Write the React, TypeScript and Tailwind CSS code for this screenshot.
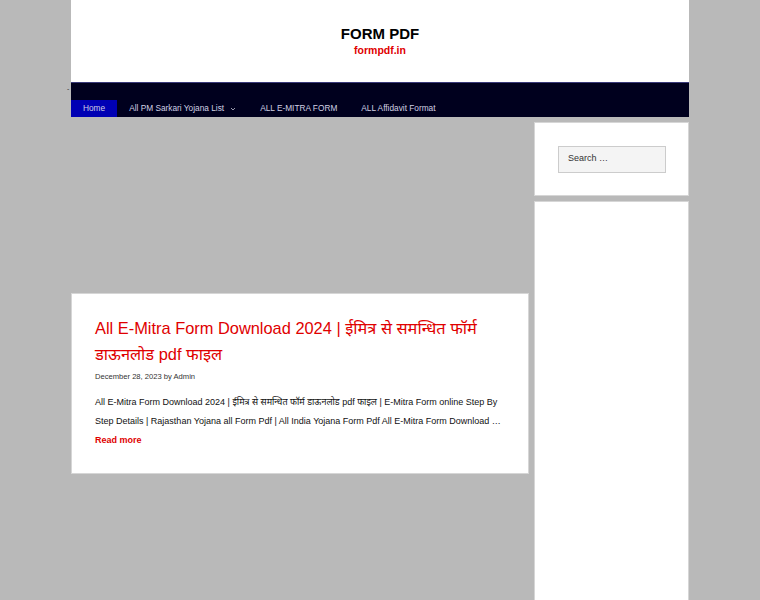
import React from "react";

export default function App() {
  const font = { fontFamily: '"Liberation Sans", Arial, "Noto Sans", sans-serif' };
  return (
    <div className="min-h-[600px] w-[760px] bg-[#b9b9b9] overflow-hidden" style={font}>
      <div className="relative mx-auto w-[618px]">
        <span className="absolute left-[-4px] top-[85px] text-[7px] leading-none text-[#333]">-</span>
        <header className="flex h-[82px] flex-col items-center justify-center bg-white">
          <div className="text-[15px] font-bold leading-[18px] text-black">FORM PDF</div>
          <div className="text-[10.5px] font-bold leading-[14px] text-[#e00000]">formpdf.in</div>
        </header>
        <nav className="flex h-[35px] items-end border-t border-[#3a3a7a] bg-[#00001e]">
          <ul className="flex text-[8.3px] leading-[17px] text-[#d0d0e4]">
            <li className="bg-[#0000b4] px-[12px]">Home</li>
            <li className="flex items-center gap-[6px] px-[12px]">
              All PM Sarkari Yojana List
              <svg width="6" height="4" viewBox="0 0 6 4" fill="none"><path d="M1 1l2 2 2-2" stroke="#aab" strokeWidth="0.9" /></svg>
            </li>
            <li className="px-[12px]">ALL E-MITRA FORM</li>
            <li className="px-[12px]">ALL Affidavit Format</li>
          </ul>
        </nav>
        <div className="mt-[5px] flex gap-[5px]">
          <main className="w-[458px]">
            <div className="h-[171px]" />
            <article className="border border-[#d6d6d6] bg-white px-[23px] pt-[21px] pb-[23px]">
              <h2 className="text-[16.4px] leading-[26px] text-[#e00000]">
                All E-Mitra Form Download 2024 | ईमित्र से समन्धित फॉर्म डाऊनलोड pdf फाइल
              </h2>
              <div className="mt-[4px] text-[7.6px] leading-[12px] text-[#333]">December 28, 2023 by Admin</div>
              <p className="mt-[10px] text-[9px] leading-[19px] text-[#111]">
                All E-Mitra Form Download 2024 | ईमित्र से समन्धित फॉर्म डाऊनलोड pdf फाइल | E-Mitra Form online Step By Step Details | Rajasthan Yojana all Form Pdf | All India Yojana Form Pdf All E-Mitra Form Download …
              </p>
              <div className="text-[9px] font-bold leading-[19px] text-[#e00000]">Read more</div>
            </article>
          </main>
          <aside className="flex w-[155px] flex-col gap-[5px]">
            <div className="flex h-[74px] items-center border border-[#d6d6d6] bg-white pl-[23px]">
              <div className="flex h-[27px] w-[108px] items-center border border-[#ccc] bg-[#f4f4f4] px-[9px] text-[9px] text-[#333]">
                Search …
              </div>
            </div>
            <div className="h-[420px] border border-[#d6d6d6] bg-white" />
          </aside>
        </div>
      </div>
    </div>
  );
}
